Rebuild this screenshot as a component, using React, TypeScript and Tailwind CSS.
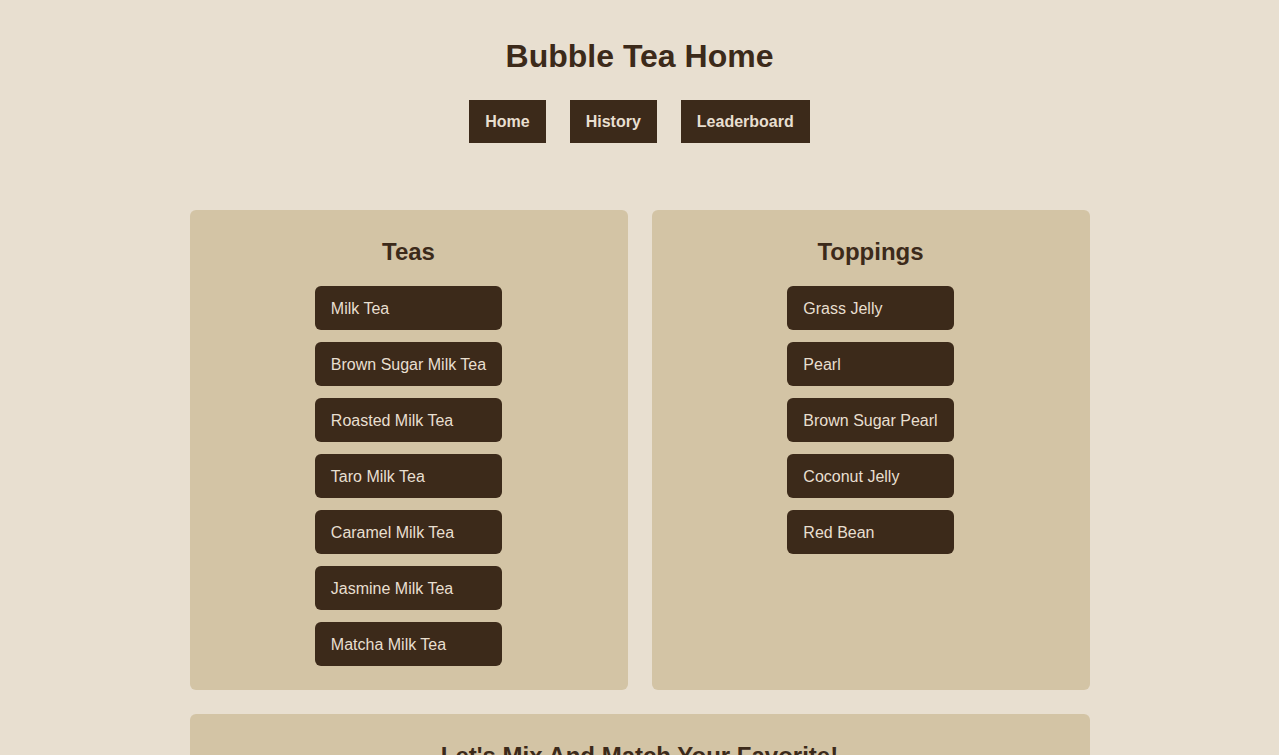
const teas = [
  'Milk Tea',
  'Brown Sugar Milk Tea',
  'Roasted Milk Tea',
  'Taro Milk Tea',
  'Caramel Milk Tea',
  'Jasmine Milk Tea',
  'Matcha Milk Tea',
];

const toppings = ['Grass Jelly', 'Pearl', 'Brown Sugar Pearl', 'Coconut Jelly', 'Red Bean'];

function Panel({ title, items }: { title: string; items: string[] }) {
  return (
    <section className="bg-[#d3c4a5] rounded-md pt-[28px] pb-[24px] px-6 flex flex-col items-center">
      <h2 className="text-[24px] leading-[28px] font-bold text-[#3c2a1a] mb-[20px]">{title}</h2>
      <div className="flex flex-col gap-3 w-fit">
        {items.map((item) => (
          <button
            key={item}
            className="bg-[#3c2a1a] text-[#e8dfd0] text-[16px] leading-[19px] text-left px-4 py-3 h-[44px] rounded-md whitespace-nowrap"
          >
            {item}
          </button>
        ))}
      </div>
    </section>
  );
}

export default function App() {
  const nav = ['Home', 'History', 'Leaderboard'];

  return (
    <div
      className="min-h-screen bg-[#e8dfd0] text-[#3c2a1a] pt-[38px] pb-10"
      style={{ fontFamily: '"Liberation Sans", Arial, sans-serif' }}
    >
      <h1 className="text-[32px] leading-[37px] font-bold text-center">Bubble Tea Home</h1>

      <nav className="flex justify-center gap-6 mt-[25px]">
        {nav.map((n) => (
          <button
            key={n}
            className="bg-[#3c2a1a] text-[#e8dfd0] font-bold text-[16px] leading-[19px] px-4 h-[43px]"
          >
            {n}
          </button>
        ))}
      </nav>

      <main className="w-[900px] mx-auto mt-[67px] flex flex-col gap-6">
        <div className="grid grid-cols-2 gap-6">
          <Panel title="Teas" items={teas} />
          <Panel title="Toppings" items={toppings} />
        </div>
        <section className="bg-[#d3c4a5] rounded-md pt-[28px] pb-[24px] px-6 flex flex-col items-center">
          <h2 className="text-[24px] leading-[28px] font-bold text-[#3c2a1a]">Let's Mix And Match Your Favorite!</h2>
          <div className="h-40" />
        </section>
      </main>
    </div>
  );
}
